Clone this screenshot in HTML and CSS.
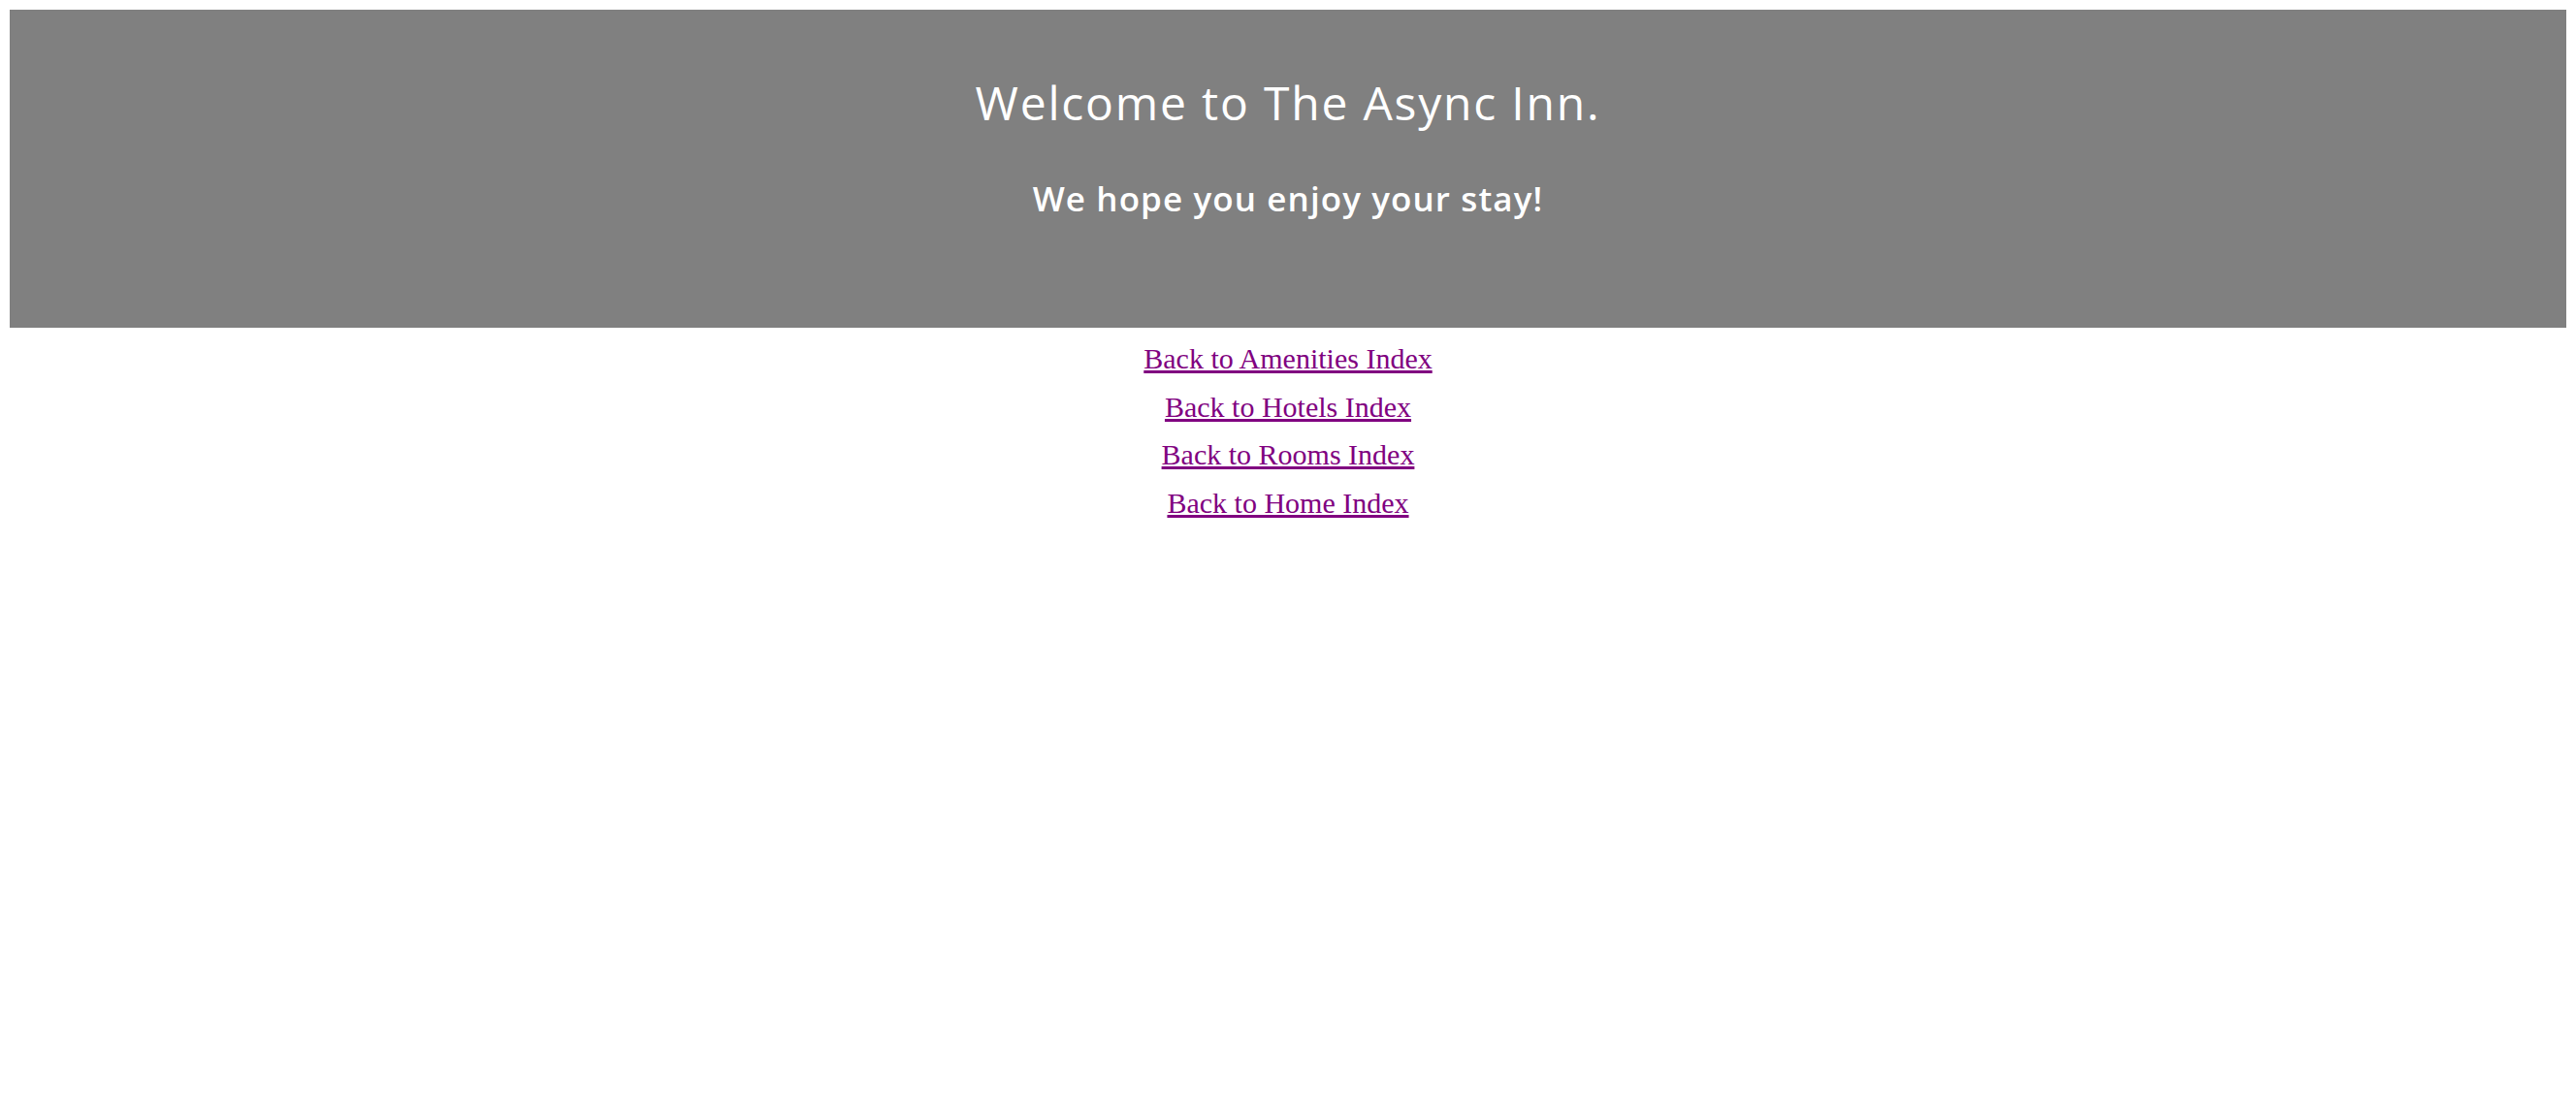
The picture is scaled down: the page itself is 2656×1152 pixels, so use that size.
FILE: index.html
```html
<!DOCTYPE html>
<html>
<head>
<meta charset="utf-8">
<title>The Async Inn</title>
<link rel="stylesheet" href="styles.css">
</head>
<body>
<header class="banner">
  <h1 class="title">Welcome to The Async Inn.</h1>
  <h2 class="subtitle">We hope you enjoy your stay!</h2>
</header>
<nav class="links">
  <a href="#">Back to Amenities Index</a>
  <a href="#">Back to Hotels Index</a>
  <a href="#">Back to Rooms Index</a>
  <a href="#">Back to Home Index</a>
</nav>
</body>
</html>
```
FILE: styles.css
```css
html, body {
  background: #ffffff;
}
body {
  margin: 10px;
  font-family: "Liberation Serif", serif;
}
.banner {
  background: #808080;
  height: 328px;
  box-sizing: border-box;
  padding-top: 66px;
  text-align: center;
  color: #ffffff;
  font-family: "Open Sans", sans-serif;
}
.title {
  margin: 0;
  font-size: 48px;
  font-weight: 400;
  line-height: 60px;
  letter-spacing: 1.8px;
}
.subtitle {
  margin: 47px 0 0;
  font-size: 35px;
  font-weight: 600;
  line-height: 44px;
  letter-spacing: 1.1px;
}
.links {
  margin-top: 7px;
  display: flex;
  flex-direction: column;
  align-items: center;
}
.links a {
  font-size: 30px;
  line-height: 49.6px;
  color: #800080;
  text-decoration: underline;
}
```
